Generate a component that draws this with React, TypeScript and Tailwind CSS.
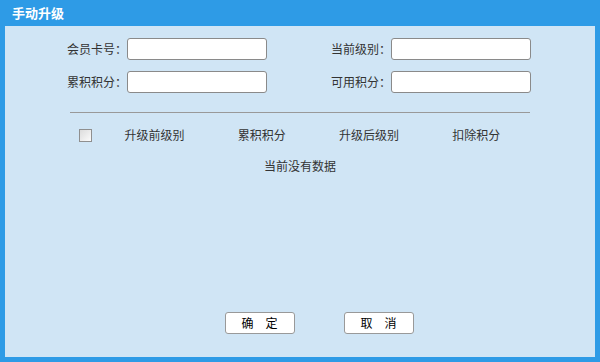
export default function App() {
  const font = { fontFamily: '"Noto Sans CJK SC", "Liberation Sans", sans-serif' };

  return (
    <div className="w-[600px] h-[362px] bg-[#2e9be6] flex flex-col text-[12px] text-[#333]" style={font}>
      {/* title bar */}
      <div className="h-[26px] flex items-center pl-[12px] text-white font-bold text-[13px]">手动升级</div>

      <div className="flex-1 mx-[5px] mb-[5px] bg-[#d0e5f5] flex flex-col">
        {/* form */}
        <div className="pt-[12px] flex flex-col gap-[11px]">
          <FormRow left="会员卡号：" right="当前级别：" />
          <FormRow left="累积积分：" right="可用积分：" />
        </div>

        {/* table */}
        <div className="mx-[65px] mt-[19px] border-t border-[#999]">
          <div className="flex items-center h-[42px] pt-[2px]">
            <div className="w-[31px] flex justify-center">
              <div className="w-[13px] h-[13px] border border-[#8f8f8f] bg-gradient-to-br from-[#dcdcdc] to-[#fbfbfb]" />
            </div>
            {["升级前级别", "累积积分", "升级后级别", "扣除积分"].map((t) => (
              <div key={t} className="flex-1 text-center">{t}</div>
            ))}
          </div>
          <div className="text-center leading-[20px] pt-[1px]">当前没有数据</div>
        </div>

        {/* buttons */}
        <div className="mt-auto mb-[23px] flex justify-center gap-[49px] pl-[38px]">
          <Btn a="确" b="定" />
          <Btn a="取" b="消" />
        </div>
      </div>
    </div>
  );
}

function FormRow({ left, right }: { left: string; right: string }) {
  return (
    <div className="flex items-center h-[22px]">
      <div className="w-[122px] text-right">{left}</div>
      <input className="w-[140px] h-[22px] bg-white border border-[#8a8a8a] rounded-[3px] outline-none" />
      <div className="w-[124px] text-right">{right}</div>
      <input className="w-[140px] h-[22px] bg-white border border-[#8a8a8a] rounded-[3px] outline-none" />
    </div>
  );
}

function Btn({ a, b }: { a: string; b: string }) {
  return (
    <button className="w-[70px] h-[22px] bg-white border border-[#999] rounded-[3px] flex items-center justify-center gap-[12px] text-black text-[12px]">
      <span>{a}</span>
      <span>{b}</span>
    </button>
  );
}
